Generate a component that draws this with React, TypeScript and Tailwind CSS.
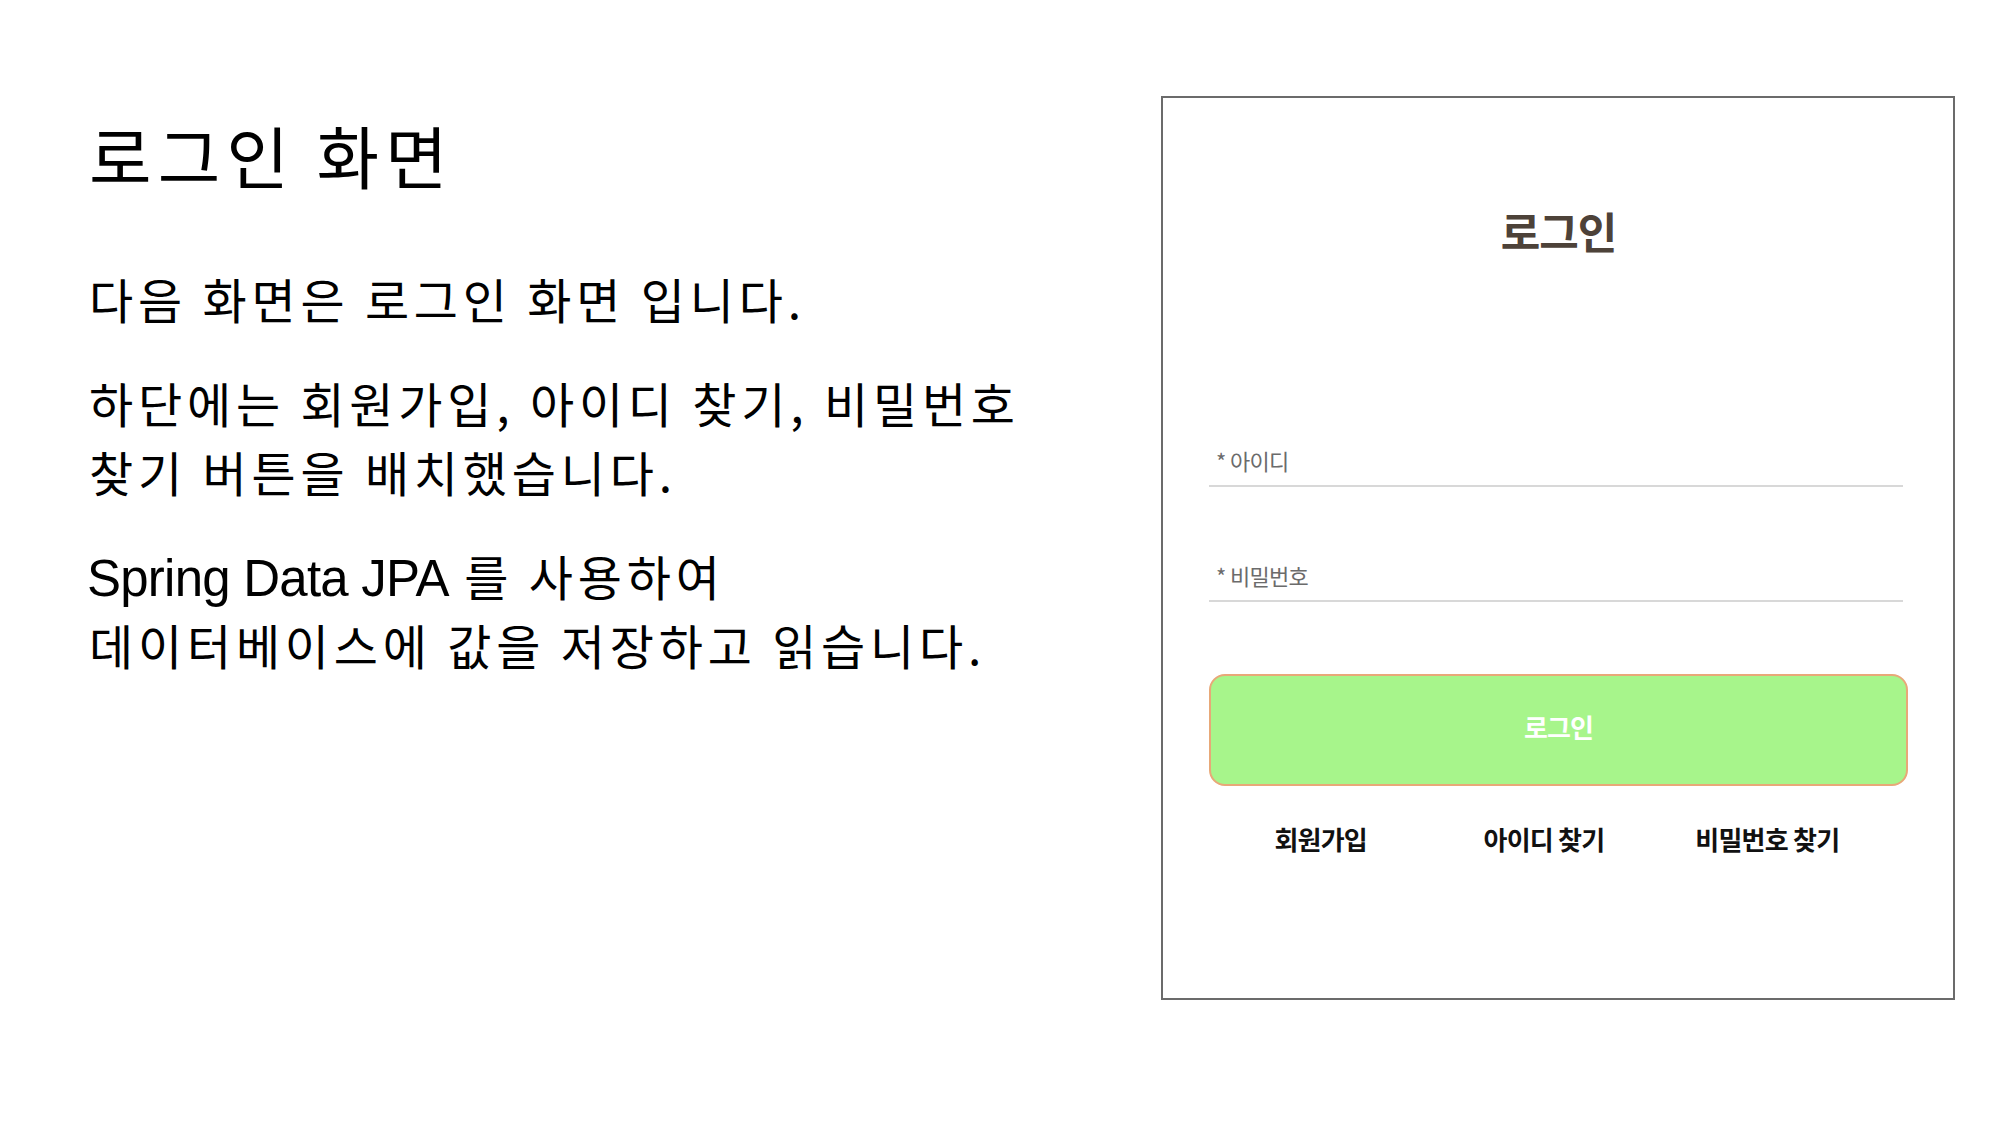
import React from "react";

const ko = { fontFamily: '"Noto Sans CJK KR", "Noto Sans", sans-serif' };
const latin = { fontFamily: '"Liberation Sans", Arial, sans-serif' };

const Field = ({ label, className }: { label: string; className?: string }) => (
  <div className={className}>
    <div className="pl-[7px] text-[22px] leading-[30px] tracking-[-0.03em] text-[#6b6b6b] pb-[10px]">{label}</div>
    <div className="h-[2px] w-[694px] bg-[#d8d8d8]" />
  </div>
);

const LoginCard = () => (
  <div className="w-[794px] h-[904px] border-2 border-[#6b6b6b] bg-white flex flex-col pt-[107px] pl-[46px]" style={ko}>
    <h2 className="w-[699px] text-center text-[43px] leading-[50px] font-bold tracking-[-1px] text-[#4d4239]">로그인</h2>

    <Field label="* 아이디" className="mt-[190px]" />
    <Field label="* 비밀번호" className="mt-[73px]" />

    <button className="mt-[72px] w-[699px] h-[112px] rounded-[16px] bg-[#a7f58b] border-2 border-[#e8a878] text-white text-[26px] leading-[34px] font-bold tracking-[-1px] pb-[6px]">
      로그인
    </button>

    <div className="mt-[36px] w-[670px] grid grid-cols-3 text-center text-[26px] leading-[34px] font-bold tracking-[-0.03em] text-[#111]">
      <span>회원가입</span>
      <span>아이디 찾기</span>
      <span>비밀번호 찾기</span>
    </div>
  </div>
);

const Line = ({ children }: { children: React.ReactNode }) => (
  <div className="h-[69px] leading-[69px] whitespace-nowrap">{children}</div>
);

export default function App() {
  return (
    <div className="w-[2000px] h-[1125px] bg-white flex overflow-hidden text-black" style={ko}>
      {/* slide text */}
      <div className="w-[1161px] pl-[89px] pt-[115px] flex flex-col">
        <h1 className="text-[68px] leading-[80px] font-normal tracking-[0.09em]">로그인 화면</h1>

        <div className="mt-[69px] text-[48px] tracking-[0.1em] flex flex-col gap-[35px]">
          <div>
            <Line>다음 화면은 로그인 화면 입니다.</Line>
          </div>
          <div>
            <Line>하단에는 회원가입, 아이디 찾기, 비밀번호</Line>
            <Line>찾기 버튼을 배치했습니다.</Line>
          </div>
          <div>
            <Line>
              <span className="text-[51px] tracking-[-0.015em] -ml-[2px]" style={latin}>Spring Data JPA</span> 를 사용하여
            </Line>
            <Line>데이터베이스에 값을 저장하고 읽습니다.</Line>
          </div>
        </div>
      </div>

      {/* screenshot of login page */}
      <div className="pt-[96px]">
        <LoginCard />
      </div>
    </div>
  );
}
